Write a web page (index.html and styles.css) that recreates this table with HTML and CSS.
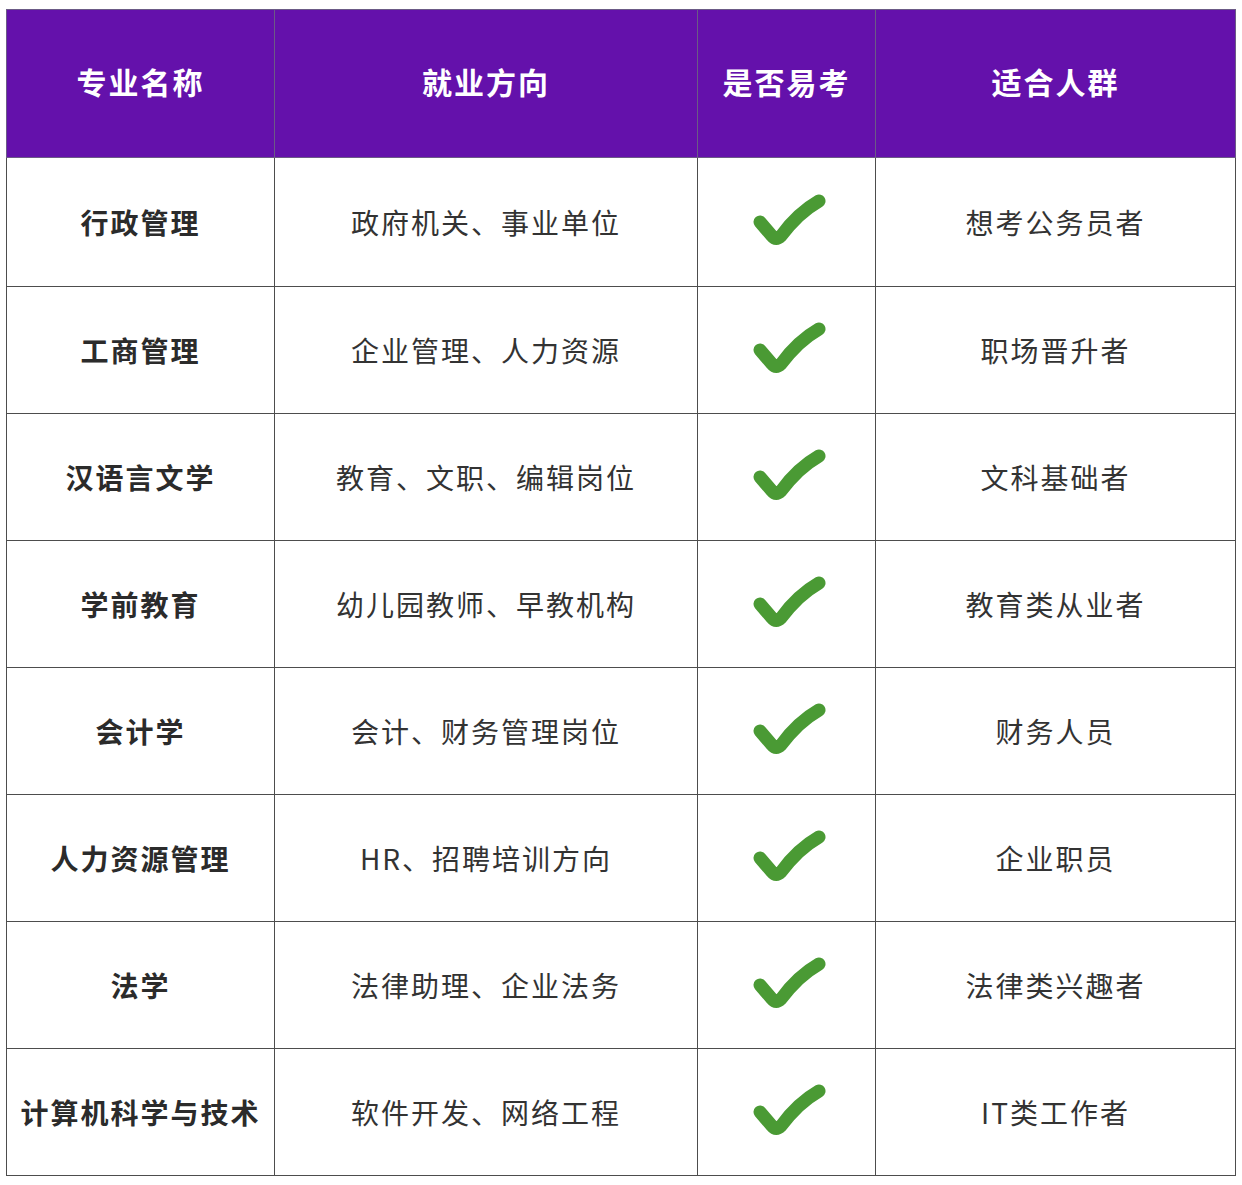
FILE: index.html
```html
<!DOCTYPE html>
<html lang="zh-CN">
<head>
<meta charset="utf-8">
<link rel="stylesheet" href="styles.css">
</head>
<body>
<table class="grid">
  <colgroup>
    <col class="c1"><col class="c2"><col class="c3"><col class="c4">
  </colgroup>
  <thead>
    <tr><th>专业名称</th><th>就业方向</th><th>是否易考</th><th>适合人群</th></tr>
  </thead>
  <tbody>
    <tr class="first"><td class="name">行政管理</td><td>政府机关、事业单位</td><td class="ok"><svg class="check" viewBox="0 0 78 58"><path d="M10,29 L22,43 Q26,48 31,43 Q48,20 69,8"/></svg></td><td>想考公务员者</td></tr>
    <tr><td class="name">工商管理</td><td>企业管理、人力资源</td><td class="ok"><svg class="check" viewBox="0 0 78 58"><path d="M10,29 L22,43 Q26,48 31,43 Q48,20 69,8"/></svg></td><td>职场晋升者</td></tr>
    <tr><td class="name">汉语言文学</td><td>教育、文职、编辑岗位</td><td class="ok"><svg class="check" viewBox="0 0 78 58"><path d="M10,29 L22,43 Q26,48 31,43 Q48,20 69,8"/></svg></td><td>文科基础者</td></tr>
    <tr><td class="name">学前教育</td><td>幼儿园教师、早教机构</td><td class="ok"><svg class="check" viewBox="0 0 78 58"><path d="M10,29 L22,43 Q26,48 31,43 Q48,20 69,8"/></svg></td><td>教育类从业者</td></tr>
    <tr><td class="name">会计学</td><td>会计、财务管理岗位</td><td class="ok"><svg class="check" viewBox="0 0 78 58"><path d="M10,29 L22,43 Q26,48 31,43 Q48,20 69,8"/></svg></td><td>财务人员</td></tr>
    <tr><td class="name">人力资源管理</td><td>HR、招聘培训方向</td><td class="ok"><svg class="check" viewBox="0 0 78 58"><path d="M10,29 L22,43 Q26,48 31,43 Q48,20 69,8"/></svg></td><td>企业职员</td></tr>
    <tr><td class="name">法学</td><td>法律助理、企业法务</td><td class="ok"><svg class="check" viewBox="0 0 78 58"><path d="M10,29 L22,43 Q26,48 31,43 Q48,20 69,8"/></svg></td><td>法律类兴趣者</td></tr>
    <tr><td class="name">计算机科学与技术</td><td>软件开发、网络工程</td><td class="ok"><svg class="check" viewBox="0 0 78 58"><path d="M10,29 L22,43 Q26,48 31,43 Q48,20 69,8"/></svg></td><td>IT类工作者</td></tr>
  </tbody>
</table>
</body>
</html>
```

FILE: styles.css
```css
html, body {
  margin: 0;
  padding: 0;
  background: #ffffff;
}
body {
  padding: 9px 0 0 6px;
  font-family: "Noto Sans CJK SC", "Noto Sans", sans-serif;
}
.grid {
  border-collapse: collapse;
  table-layout: fixed;
  width: 1229px;
}
.c1 { width: 268px; }
.c2 { width: 423px; }
.c3 { width: 178px; }
.c4 { width: 360px; }
.grid th, .grid td {
  border: 1.5px solid #4d4d4d;
  text-align: center;
  vertical-align: middle;
  padding: 0;
}
.grid th {
  background: #6411ab;
  color: #ffffff;
  font-size: 30px;
  font-weight: 700;
  letter-spacing: 2px;
  height: 141px;
  padding-bottom: 6px;
  border-color: #6b5a86;
}
.grid td {
  height: 126px;
  font-size: 28px;
  letter-spacing: 2px;
  color: #333333;
  font-weight: 400;
}
.grid tr.first td {
  height: 128px;
}
.grid td.name {
  font-weight: 700;
  letter-spacing: 2px;
  color: #2b2b2b;
}
.check {
  display: block;
  width: 78px;
  height: 58px;
  margin: 0 auto;
  position: relative;
  left: 2px;
}
.check path {
  fill: none;
  stroke: #4a9a34;
  stroke-width: 13;
  stroke-linecap: round;
  stroke-linejoin: round;
}
```
